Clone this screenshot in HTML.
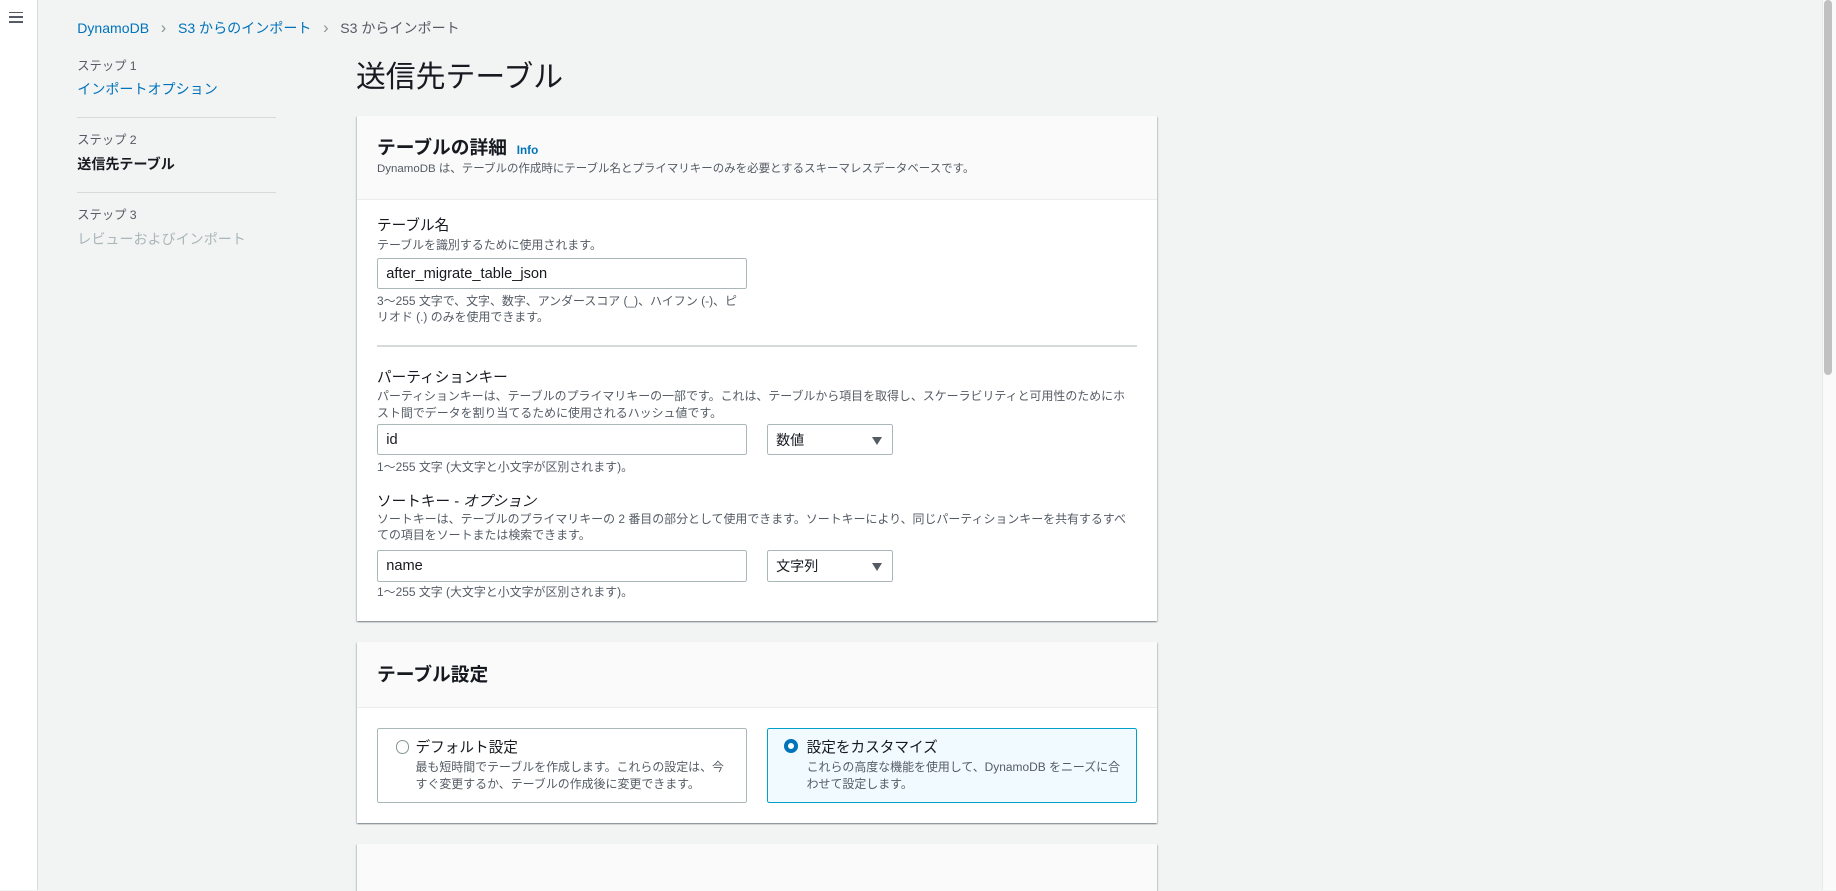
<!DOCTYPE html>
<html><head><meta charset="utf-8"><style>
html,body{margin:0;padding:0;}
body{width:1836px;height:867px;overflow:hidden;background:#f2f3f3;font-family:"Liberation Sans","Noto Sans CJK JP",sans-serif;color:#16191f;}
#w{zoom:1.17092;width:1568px;height:760px;position:relative;}
.a{position:absolute;white-space:nowrap;line-height:1.25;}
.nav{left:0;top:0;width:32px;height:760px;background:#fff;border-right:1px solid #d5dbdb;}
.bl{color:#0073bb}
.card{position:absolute;left:305px;width:683px;background:#fff;box-shadow:0 1px 1px 0 rgba(0,28,36,.3),1px 1px 1px 0 rgba(0,28,36,.15),-1px 1px 1px 0 rgba(0,28,36,.15);}
.hd{background:#fafafa;border-bottom:1px solid #eaeded;position:relative;}
.lbl{font-size:12.5px;}
.ds{font-size:10.2px;color:#545b64;}
.in{position:absolute;border:1px solid #aab7b8;border-radius:2px;background:#fff;font-size:12.5px;box-sizing:border-box;padding-left:7px;line-height:26px;}
.sel{position:absolute;border:1px solid #aab7b8;border-radius:2px;background:#fff;font-size:12px;box-sizing:border-box;padding-left:7px;line-height:26px;}
.tri{position:absolute;right:9px;top:10px;width:0;height:0;border-left:5px solid transparent;border-right:5px solid transparent;border-top:7px solid #545b64;}
.tile{position:absolute;box-sizing:border-box;border:1px solid #aab7b8;border-radius:2px;}
</style></head><body><div id="w">
<div class="a nav"></div>
<div class="a" style="left:8px;top:10px;width:12px;height:1.5px;background:#545b64"></div>
<div class="a" style="left:8px;top:14px;width:12px;height:1.5px;background:#545b64"></div>
<div class="a" style="left:8px;top:18px;width:12px;height:1.5px;background:#545b64"></div>

<div class="a" style="left:66px;top:15px;font-size:12px;"><span class="bl">DynamoDB</span><span style="color:#879596;margin:0 10px;font-size:14px">›</span><span class="bl">S3 からのインポート</span><span style="color:#879596;margin:0 10px;font-size:14px">›</span><span style="color:#545b64">S3 からインポート</span></div>

<div class="a" style="left:66px;top:50px;font-size:10.5px;color:#545b64">ステップ 1</div>
<div class="a bl" style="left:66px;top:69px;font-size:12px;">インポートオプション</div>
<div class="a" style="left:66px;top:100px;width:170px;height:1px;background:#d5dbdb"></div>
<div class="a" style="left:66px;top:114px;font-size:10.5px;color:#545b64">ステップ 2</div>
<div class="a" style="left:66px;top:133px;font-size:12px;font-weight:bold">送信先テーブル</div>
<div class="a" style="left:66px;top:164px;width:170px;height:1px;background:#d5dbdb"></div>
<div class="a" style="left:66px;top:178px;font-size:10.5px;color:#545b64">ステップ 3</div>
<div class="a" style="left:66px;top:197px;font-size:12px;color:#aab7b8">レビューおよびインポート</div>

<div class="a" style="left:304px;top:50px;font-size:25.5px;">送信先テーブル</div>

<div class="card" style="top:99px;height:431px;">
 <div class="hd" style="height:71px;">
  <div class="a" style="left:17px;top:17px;font-size:16px;font-weight:bold">テーブルの詳細 <span class="bl" style="font-size:10px;margin-left:4px">Info</span></div>
  <div class="a" style="left:17px;top:39px;font-size:9.8px;color:#545b64">DynamoDB は、テーブルの作成時にテーブル名とプライマリキーのみを必要とするスキーマレスデータベースです。</div>
 </div>
 <div class="a lbl" style="left:17px;top:86px">テーブル名</div>
 <div class="a ds" style="left:17px;top:104px">テーブルを識別するために使用されます。</div>
 <div class="in" style="left:17px;top:121px;width:316px;height:27px">after_migrate_table_json</div>
 <div class="a ds" style="left:17px;top:151px;line-height:14px">3〜255 文字で、文字、数字、アンダースコア (_)、ハイフン (-)、ピ<br>リオド (.) のみを使用できます。</div>
 <div class="a" style="left:17px;top:196px;width:649px;height:1px;background:#d5dbdb"></div>
 <div class="a lbl" style="left:17px;top:216px">パーティションキー</div>
 <div class="a ds" style="left:17px;top:232px;line-height:14.5px">パーティションキーは、テーブルのプライマリキーの一部です。これは、テーブルから項目を取得し、スケーラビリティと可用性のためにホ<br>スト間でデータを割り当てるために使用されるハッシュ値です。</div>
 <div class="in" style="left:17px;top:263px;width:316px;height:27px">id</div>
 <div class="sel" style="left:350px;top:263px;width:108px;height:27px">数値<div class="tri"></div></div>
 <div class="a ds" style="left:17px;top:294px">1〜255 文字 (大文字と小文字が区別されます)。</div>
 <div class="a lbl" style="left:17px;top:322px">ソートキー - <i>オプション</i></div>
 <div class="a ds" style="left:17px;top:337px;line-height:14.5px">ソートキーは、テーブルのプライマリキーの 2 番目の部分として使用できます。ソートキーにより、同じパーティションキーを共有するすべ<br>ての項目をソートまたは検索できます。</div>
 <div class="in" style="left:17px;top:371px;width:316px;height:27px">name</div>
 <div class="sel" style="left:350px;top:371px;width:108px;height:27px">文字列<div class="tri"></div></div>
 <div class="a ds" style="left:17px;top:401px">1〜255 文字 (大文字と小文字が区別されます)。</div>
</div>

<div class="card" style="top:548px;height:155px;">
 <div class="hd" style="height:56px;">
  <div class="a" style="left:17px;top:18px;font-size:16px;font-weight:bold">テーブル設定</div>
 </div>
 <div class="tile" style="left:17px;top:74px;width:316px;height:64px;">
  <div class="a" style="left:15px;top:9px;width:10px;height:10px;border:1.5px solid #879596;border-radius:50%"></div>
  <div class="a" style="left:32px;top:8px;font-size:12.5px">デフォルト設定</div>
  <div class="a ds" style="left:32px;top:25px;line-height:14.5px">最も短時間でテーブルを作成します。これらの設定は、今<br>すぐ変更するか、テーブルの作成後に変更できます。</div>
 </div>
 <div class="tile" style="left:350px;top:74px;width:316px;height:64px;border-color:#00a1c9;background:#f1faff">
  <div class="a" style="left:14px;top:8px;width:5px;height:5px;border:4px solid #0073bb;border-radius:50%;background:#fff"></div>
  <div class="a" style="left:33px;top:8px;font-size:12.5px">設定をカスタマイズ</div>
  <div class="a ds" style="left:33px;top:25px;line-height:14.5px">これらの高度な機能を使用して、DynamoDB をニーズに合<br>わせて設定します。</div>
 </div>
</div>

<div class="card" style="top:721px;height:40px;"><div class="hd" style="height:40px;border:0"></div></div>

<div class="a" style="left:1556px;top:0;width:12px;height:760px;background:#fafafa;border-left:1px solid #e8e8e8"></div>
<div class="a" style="left:1558px;top:0;width:7px;height:320px;background:#c1c1c1;border-radius:4px"></div>
</div></body></html>
